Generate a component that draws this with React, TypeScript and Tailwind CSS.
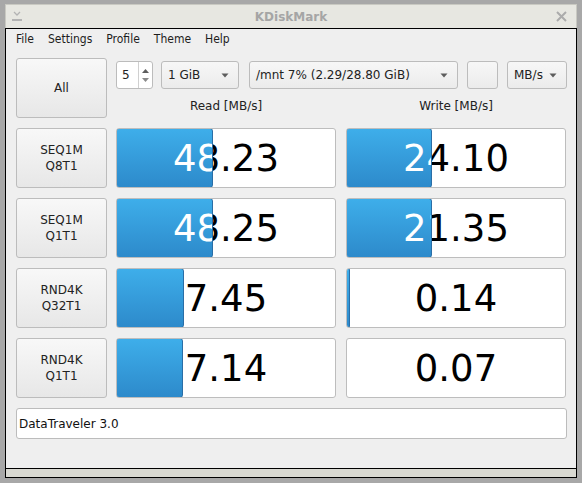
import React from "react"

interface Row {
  line1: string
  line2: string
  read: string
  readFill: number
  write: string
  writeFill: number
}

const rows: Row[] = [
  { line1: "SEQ1M", line2: "Q8T1", read: "48.23", readFill: 96, write: "24.10", writeFill: 85 },
  { line1: "SEQ1M", line2: "Q1T1", read: "48.25", readFill: 96, write: "21.35", writeFill: 85 },
  { line1: "RND4K", line2: "Q32T1", read: "7.45", readFill: 67, write: "0.14", writeFill: 3 },
  { line1: "RND4K", line2: "Q1T1", read: "7.14", readFill: 66, write: "0.07", writeFill: 0 },
]

function Arrow() {
  return (
    <svg width="8" height="5" viewBox="0 0 8 5">
      <path d="M0.5 0.5 L7.5 0.5 L4 4.5 Z" fill="#5d5d5d" />
    </svg>
  )
}

function Combo({ label, className }: { label: string; className: string }) {
  return (
    <div
      className={`h-[28px] flex items-center justify-between pl-[6px] pr-[9px] rounded-[3px] border border-[#bcbcbc] bg-gradient-to-b from-[#f7f7f7] to-[#ebebeb] text-[12px] text-[#222] ${className}`}
    >
      <span>{label}</span>
      <Arrow />
    </div>
  )
}

function Bar({ value, fill }: { value: string; fill: number }) {
  return (
    <div className="relative h-[60px] rounded-[3px] border border-[#bdbdbd] bg-white overflow-hidden">
      <div className="absolute inset-0 pt-[2px] flex items-center justify-center text-[37px] text-black">
        {value}
      </div>
      {fill > 0 && (
        <div
          className="absolute left-[-1px] top-[-1px] bottom-[-1px] overflow-hidden rounded-[3px] border border-[#2a6ea6] bg-gradient-to-b from-[#3eaeea] to-[#2d8acb]"
          style={{ width: fill + 1 }}
        >
          <div className="absolute left-0 top-0 bottom-0 w-[218px] pt-[2px] flex items-center justify-center text-[37px] text-white">
            {value}
          </div>
        </div>
      )}
    </div>
  )
}

export default function App() {
  return (
    <div className="w-[582px] h-[483px] bg-[#a8a8a8] pt-[4px] pl-[5px] font-['DejaVu_Sans',sans-serif] overflow-hidden">
      <div className="w-[572px] flex flex-col">
        {/* Title bar */}
        <div className="relative h-[24px] bg-[#e7e7e1] border border-b-0 border-[#c9c9c2] flex items-center justify-center">
          <div className="absolute left-[6px] top-[5px] flex flex-col items-center">
            <svg width="10" height="8" viewBox="0 0 10 8">
              <path d="M2 2 L5 5 L8 2" fill="none" stroke="#b3b3b3" strokeWidth="1.3" />
            </svg>
            <div className="w-[10px] h-[2px] bg-[#b3b3b3] mt-[1px]" />
          </div>
          <span className="text-[12px] font-bold text-[#a5a5a5]">KDiskMark</span>
          <svg className="absolute right-[9px] top-[6px]" width="11" height="11" viewBox="0 0 11 11">
            <path d="M1 1 L10 10 M10 1 L1 10" stroke="#ababab" strokeWidth="2" />
          </svg>
        </div>

        {/* Window body */}
        <div className="h-[450px] border border-black bg-[#efefef] flex flex-col">
          {/* Menu */}
          <div className="h-[19px] flex items-center gap-[14px] pl-[10px] pt-[1px] text-[12px] text-[#1d1d1d] font-['DejaVu_Sans_Condensed','DejaVu_Sans',sans-serif] [font-stretch:condensed]">
            <span>File</span>
            <span>Settings</span>
            <span>Profile</span>
            <span>Theme</span>
            <span>Help</span>
          </div>

          {/* Content */}
          <div className="h-[420px] pt-[10px] pl-[10px] flex flex-col gap-[10px]">
            <div className="flex gap-[9px] h-[60px]">
              <div className="w-[91px] h-[60px] rounded-[3px] border border-[#bcbcbc] bg-gradient-to-b from-[#f8f8f8] to-[#e7e7e7] flex items-center justify-center text-[12px] text-[#222]">
                All
              </div>
              <div className="w-[451px] flex flex-col">
                <div className="mt-[3px] flex">
                  <div className="w-[37px] h-[28px] rounded-[3px] border border-[#bcbcbc] bg-white flex text-[12px] text-[#222]">
                    <div className="w-[21px] flex items-center pl-[5px]">5</div>
                    <div className="flex-1 border-l border-[#d0d0d0] flex flex-col items-center justify-center gap-[5px]">
                      <svg width="7" height="4" viewBox="0 0 7 4">
                        <path d="M0 4 L3.5 0 L7 4 Z" fill="#5d5d5d" />
                      </svg>
                      <svg width="7" height="4" viewBox="0 0 7 4">
                        <path d="M0 0 L3.5 4 L7 0 Z" fill="#8a8a8a" />
                      </svg>
                    </div>
                  </div>
                  <Combo label="1 GiB" className="w-[78px] ml-[8px]" />
                  <Combo label="/mnt 7% (2.29/28.80 GiB)" className="w-[209px] ml-[10px]" />
                  <div className="w-[31px] h-[28px] ml-[9px] rounded-[3px] border border-[#bcbcbc] bg-gradient-to-b from-[#f7f7f7] to-[#ebebeb]" />
                  <Combo label="MB/s" className="w-[60px] ml-[9px]" />
                </div>
                <div className="flex-1 flex items-end pb-[3px] gap-[10px] text-[12px] text-[#222]">
                  <div className="w-[220px] text-center">Read [MB/s]</div>
                  <div className="w-[220px] text-center">Write [MB/s]</div>
                </div>
              </div>
            </div>

            {rows.map((r, i) => (
              <div key={i} className="flex h-[60px]">
                <div className="w-[91px] h-[60px] rounded-[3px] border border-[#bcbcbc] bg-gradient-to-b from-[#f8f8f8] to-[#e7e7e7] flex flex-col items-center justify-center text-[12px] leading-[16px] text-[#222]">
                  <span>{r.line1}</span>
                  <span>{r.line2}</span>
                </div>
                <div className="w-[220px] ml-[9px]">
                  <Bar value={r.read} fill={r.readFill} />
                </div>
                <div className="w-[220px] ml-[10px]">
                  <Bar value={r.write} fill={r.writeFill} />
                </div>
              </div>
            ))}

            <div className="w-[551px] h-[31px] rounded-[3px] border border-[#bcbcbc] bg-white flex items-center pl-[2px] text-[12px] text-[#111]">
              DataTraveler 3.0
            </div>
          </div>

          {/* Status bar */}
          <div className="h-[9px] border-t border-black bg-[#d9d9d2]" />
        </div>
      </div>
    </div>
  )
}
